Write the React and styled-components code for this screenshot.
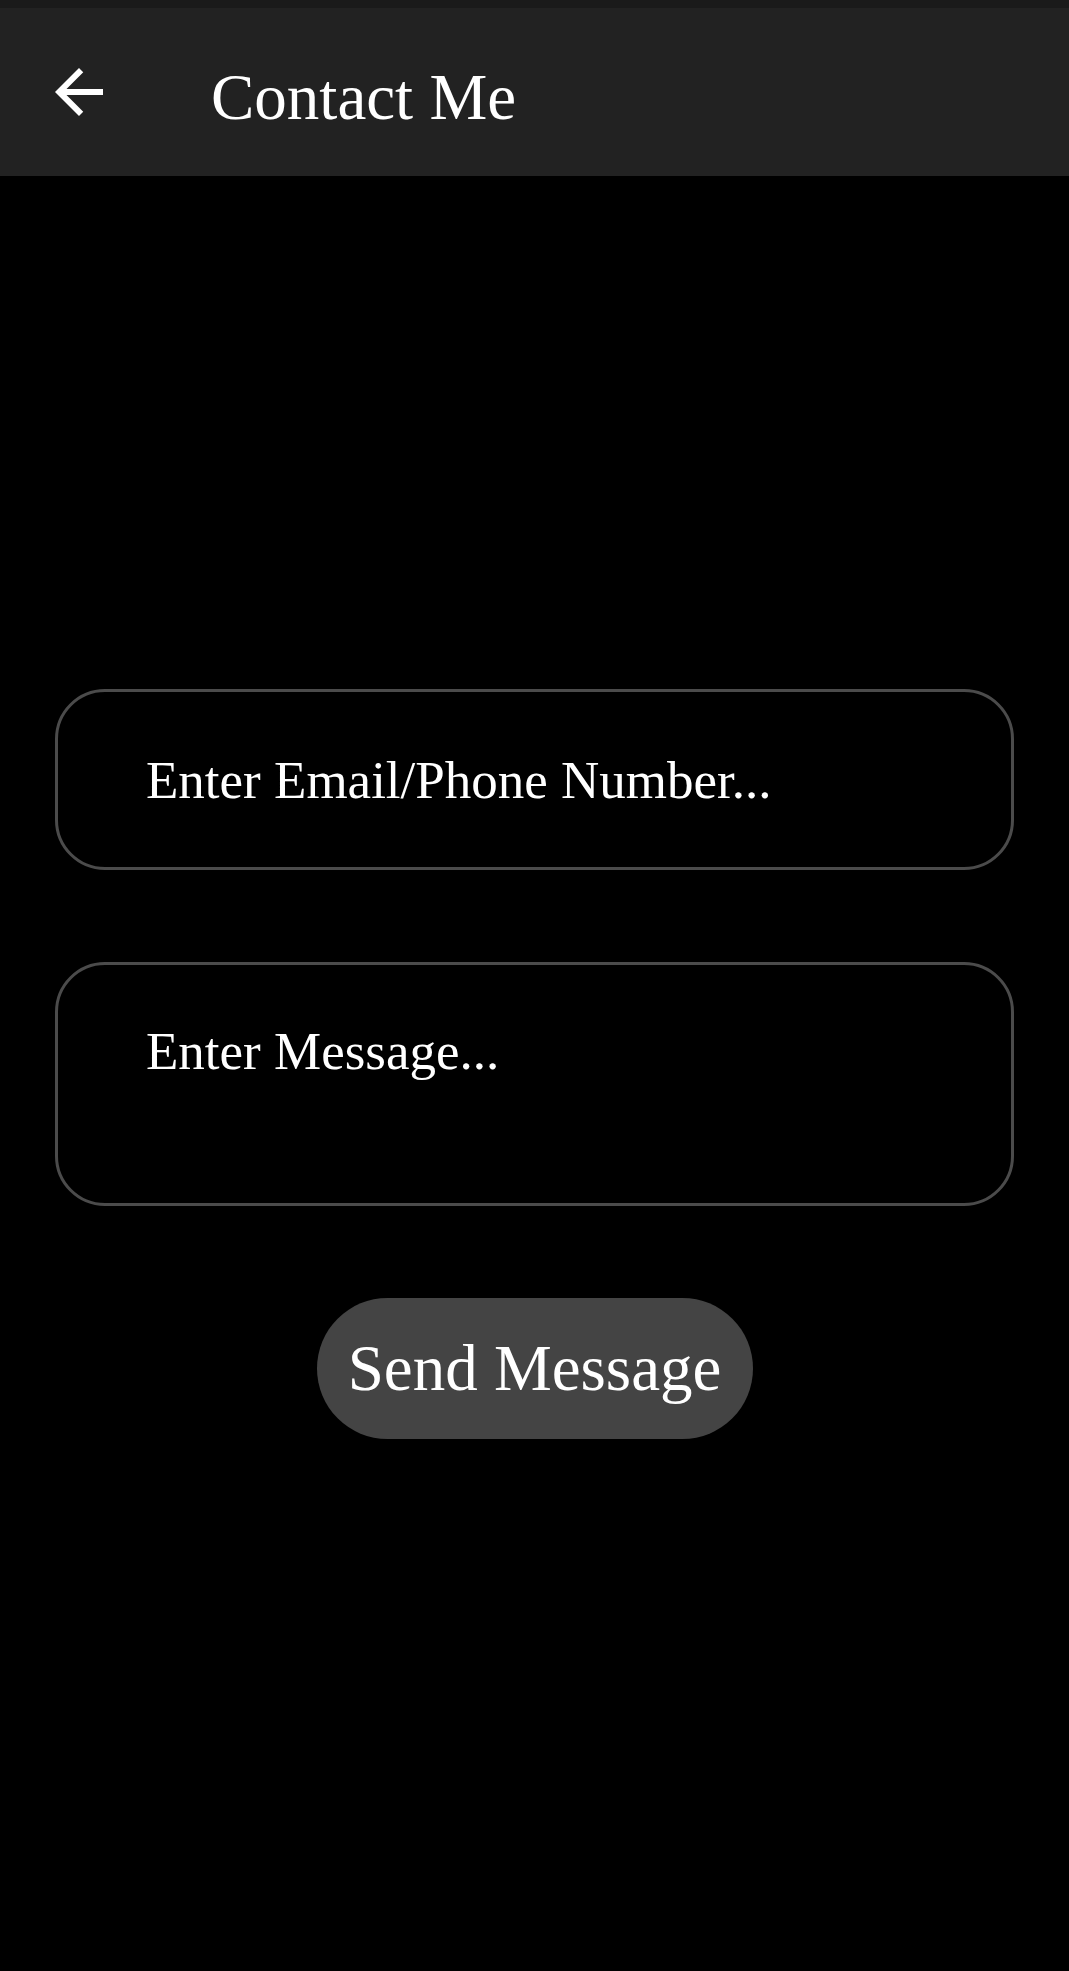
import React from "react";
import styled, { createGlobalStyle } from "styled-components";

const GlobalStyle = createGlobalStyle`
  * {
    box-sizing: border-box;
  }
  body {
    margin: 0;
    background-color: #000000;
    font-family: "Liberation Serif", "DejaVu Serif", serif;
    color: #ffffff;
  }
`;

const Page = styled.div`
  min-height: 1971px;
  background-color: #000000;
  display: flex;
  flex-direction: column;
`;

const StatusStrip = styled.div`
  height: 8px;
  background-color: #1a1a1a;
`;

const Header = styled.header`
  height: 168px;
  background-color: #222222;
  display: flex;
  align-items: center;
  padding-left: 43px;
  gap: 96px;
`;

const BackButton = styled.button`
  width: 72px;
  height: 72px;
  padding: 0;
  border: none;
  background: none;
  color: #ffffff;
  display: flex;
  align-items: center;
  justify-content: center;
  cursor: pointer;

  svg {
    width: 72px;
    height: 72px;
  }
`;

const Title = styled.h1`
  margin: 0;
  padding-top: 10px;
  font-family: "Liberation Serif", "DejaVu Serif", serif;
  font-weight: 400;
  font-size: 65px;
  line-height: 1;
  color: #ffffff;
`;

const Form = styled.form`
  display: flex;
  flex-direction: column;
  align-items: center;
  gap: 92px;
  padding: 513px 55px 0;
`;

const fieldBase = `
  width: 100%;
  border: 3px solid #4b4b4b;
  border-radius: 50px;
  background-color: #000000;
  color: #ffffff;
  font-family: "Liberation Serif", "DejaVu Serif", serif;
  font-size: 53px;
  line-height: 61px;
  padding: 0 40px 0 88px;
  outline: none;

  &::placeholder {
    color: #ffffff;
    opacity: 1;
  }
`;

const TextField = styled.input`
  ${fieldBase}
  height: 181px;
`;

const MessageField = styled.textarea`
  ${fieldBase}
  height: 244px;
  padding-top: 56px;
  resize: none;
`;

const SendButton = styled.button`
  width: 436px;
  height: 141px;
  border: none;
  border-radius: 71px;
  background-color: #444444;
  color: #ffffff;
  font-family: "Liberation Serif", "DejaVu Serif", serif;
  font-size: 65px;
  line-height: 1;
  padding: 0;
  cursor: pointer;
`;

const ArrowBack = () => (
  <svg viewBox="0 0 24 24" fill="currentColor">
    <path d="M20 11H7.83l5.59-5.59L12 4l-8 8 8 8 1.41-1.41L7.83 13H20v-2z" />
  </svg>
);

const App = () => {
  const handleSubmit = (event) => {
    event.preventDefault();
  };

  return (
    <Page>
      <GlobalStyle />
      <StatusStrip />
      <Header>
        <BackButton aria-label="Back">
          <ArrowBack />
        </BackButton>
        <Title>Contact Me</Title>
      </Header>
      <Form onSubmit={handleSubmit}>
        <TextField type="text" placeholder="Enter Email/Phone Number..." />
        <MessageField placeholder="Enter Message..." />
        <SendButton type="submit">Send Message</SendButton>
      </Form>
    </Page>
  );
};

export default App;
